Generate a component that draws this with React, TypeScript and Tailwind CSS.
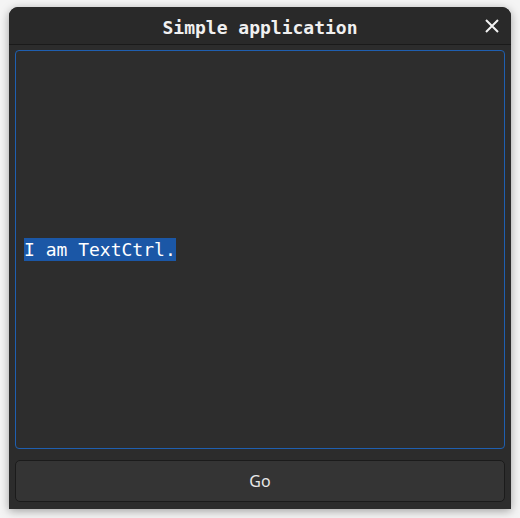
export default function App() {
  return (
    <div className="h-[518px] w-[520px] overflow-hidden bg-[#f4f4f4] px-[9px] pt-[7px]">
      <div className="flex h-[502px] flex-col rounded-t-[9px] bg-[#2c2c2c] shadow-[0_2px_10px_rgba(0,0,0,0.35)]">
        <div className="relative flex h-[38px] items-center justify-center rounded-t-[9px] border-b border-[#1a1a1a] bg-[#292929] pt-[3px]">
          <span className="font-['DejaVu_Sans_Mono',monospace] text-[18px] font-bold text-[#f0f0f0]">
            Simple application
          </span>
          <svg
            className="absolute right-[12px] top-[12px]"
            width="14"
            height="14"
            viewBox="0 0 14 14"
          >
            <path
              d="M1 1L13 13M13 1L1 13"
              stroke="#f2f2f2"
              strokeWidth="2"
              fill="none"
            />
          </svg>
        </div>
        <div className="flex flex-1 flex-col gap-[11px] px-[6px] pb-[7px] pt-[5px]">
          <div className="flex h-[399px] items-center rounded-[4px] border border-[#1f5fb0] bg-[#2d2d2d] px-[8px]">
            <span className="bg-[#1b57a6] font-['DejaVu_Sans_Mono',monospace] text-[18px] leading-[23px] text-white">
              I am TextCtrl.
            </span>
          </div>
          <button className="flex h-[42px] items-center justify-center rounded-[5px] border border-[#1b1b1b] bg-[#343434] font-['Noto_Sans',sans-serif] text-[16px] text-[#e8e8e8]">
            Go
          </button>
        </div>
      </div>
    </div>
  );
}
